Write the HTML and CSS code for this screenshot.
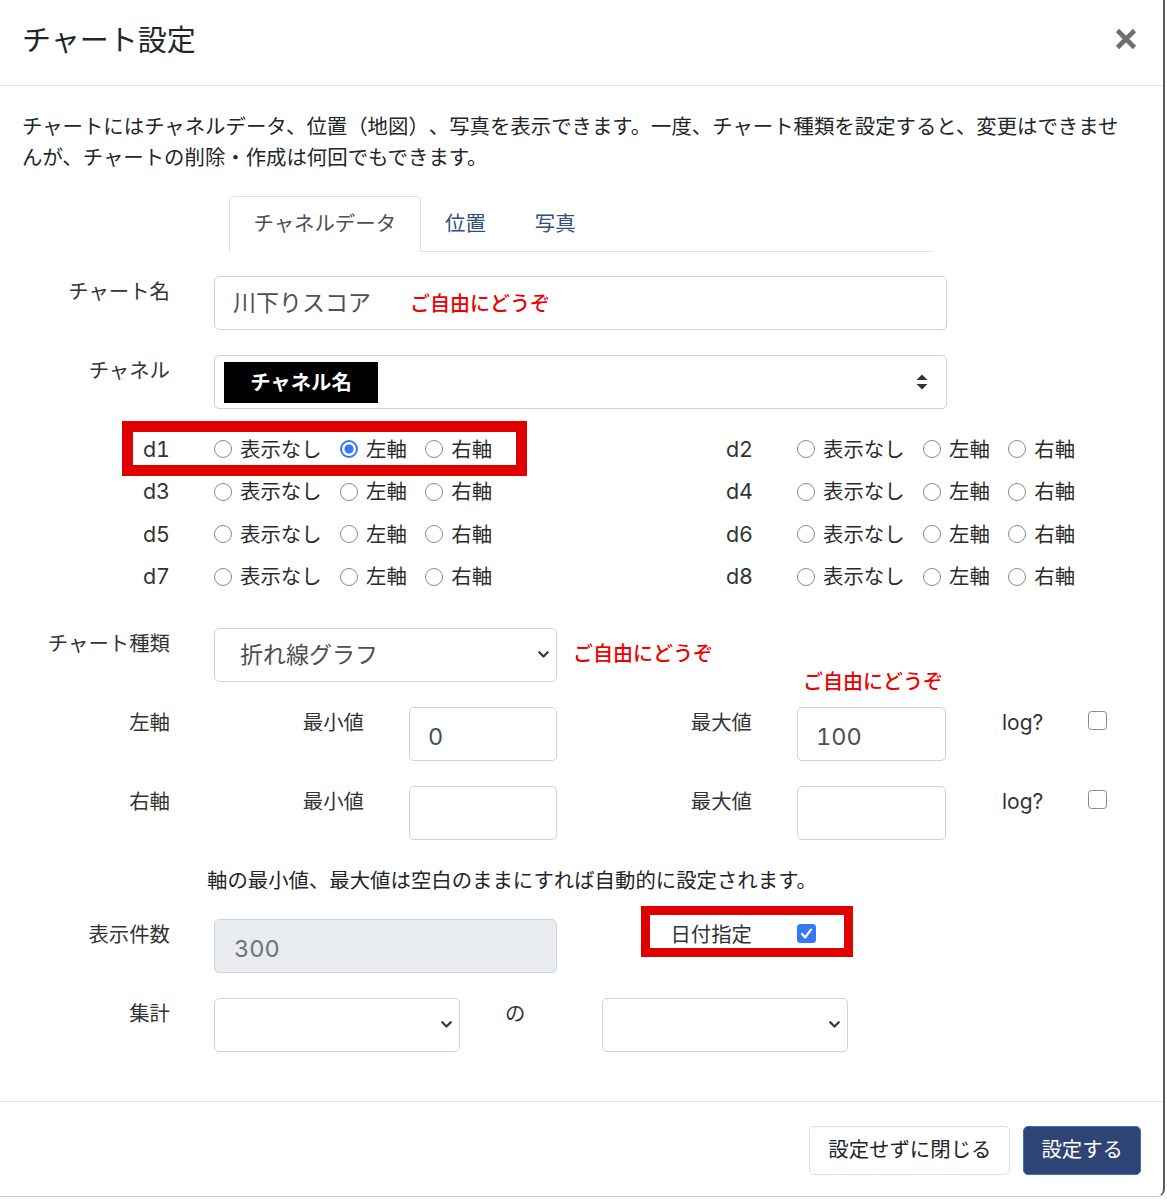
FILE: index.html
```html
<!DOCTYPE html>
<html lang="ja">
<head>
<meta charset="utf-8">
<title>チャート設定</title>
<link rel="stylesheet" href="styles.css">
</head>
<body>
<div class="modal">
  <div class="modal-header">
    <h5 class="modal-title">チャート設定</h5>
    <button class="close" type="button" aria-label="Close">
      <svg width="22" height="22" viewBox="0 0 22 22"><path d="M2.5 2.5L19.5 19.5M19.5 2.5L2.5 19.5" stroke="#6f6f6f" stroke-width="4.6" fill="none"/></svg>
    </button>
  </div>

  <div class="modal-body">
    <p class="intro">チャートにはチャネルデータ、位置（地図）、写真を表示できます。一度、チャート種類を設定すると、変更はできませんが、チャートの削除・作成は何回でもできます。</p>

    <ul class="nav-tabs">
      <li class="tab active">チャネルデータ</li>
      <li class="tab">位置</li>
      <li class="tab">写真</li>
    </ul>

    <div class="form-row">
      <label class="row-label">チャート名</label>
      <div class="fc fc-wide">
        <span class="value">川下りスコア</span>
        <span class="red-note inline-note">ご自由にどうぞ</span>
      </div>
    </div>

    <div class="form-row mb-tight">
      <label class="row-label">チャネル</label>
      <div class="fc fc-wide fc-select">
        <span class="badge">チャネル名</span>
        <svg class="updown" width="12" height="16" viewBox="0 0 12 16"><path d="M6 0.5L11.5 6H0.5Z M0.5 10H11.5L6 15.5Z" fill="#333"/></svg>
      </div>
    </div>

    <div class="radios">
      <div class="dlabel">d1</div>
      <div class="rgroup">
        <label class="ritem"><input type="radio" name="d1"><span>表示なし</span></label>
        <label class="ritem"><input type="radio" name="d1" checked><span>左軸</span></label>
        <label class="ritem"><input type="radio" name="d1"><span>右軸</span></label>
      </div>
      <div class="dlabel">d2</div>
      <div class="rgroup">
        <label class="ritem"><input type="radio" name="d2"><span>表示なし</span></label>
        <label class="ritem"><input type="radio" name="d2"><span>左軸</span></label>
        <label class="ritem"><input type="radio" name="d2"><span>右軸</span></label>
      </div>

      <div class="dlabel">d3</div>
      <div class="rgroup">
        <label class="ritem"><input type="radio" name="d3"><span>表示なし</span></label>
        <label class="ritem"><input type="radio" name="d3"><span>左軸</span></label>
        <label class="ritem"><input type="radio" name="d3"><span>右軸</span></label>
      </div>
      <div class="dlabel">d4</div>
      <div class="rgroup">
        <label class="ritem"><input type="radio" name="d4"><span>表示なし</span></label>
        <label class="ritem"><input type="radio" name="d4"><span>左軸</span></label>
        <label class="ritem"><input type="radio" name="d4"><span>右軸</span></label>
      </div>

      <div class="dlabel">d5</div>
      <div class="rgroup">
        <label class="ritem"><input type="radio" name="d5"><span>表示なし</span></label>
        <label class="ritem"><input type="radio" name="d5"><span>左軸</span></label>
        <label class="ritem"><input type="radio" name="d5"><span>右軸</span></label>
      </div>
      <div class="dlabel">d6</div>
      <div class="rgroup">
        <label class="ritem"><input type="radio" name="d6"><span>表示なし</span></label>
        <label class="ritem"><input type="radio" name="d6"><span>左軸</span></label>
        <label class="ritem"><input type="radio" name="d6"><span>右軸</span></label>
      </div>

      <div class="dlabel">d7</div>
      <div class="rgroup">
        <label class="ritem"><input type="radio" name="d7"><span>表示なし</span></label>
        <label class="ritem"><input type="radio" name="d7"><span>左軸</span></label>
        <label class="ritem"><input type="radio" name="d7"><span>右軸</span></label>
      </div>
      <div class="dlabel">d8</div>
      <div class="rgroup">
        <label class="ritem"><input type="radio" name="d8"><span>表示なし</span></label>
        <label class="ritem"><input type="radio" name="d8"><span>左軸</span></label>
        <label class="ritem"><input type="radio" name="d8"><span>右軸</span></label>
      </div>

      <div class="red-box box-d1"></div>
    </div>

    <div class="form-row">
      <label class="row-label">チャート種類</label>
      <div class="inline">
        <div class="fc fc-select fc-type">
          <span class="value">折れ線グラフ</span>
          <svg class="chev" width="11" height="7" viewBox="0 0 11 7"><path d="M1.3 1.3L5.5 5.5L9.7 1.3" stroke="#343a40" stroke-width="2.3" fill="none" stroke-linecap="round" stroke-linejoin="round"/></svg>
        </div>
        <span class="red-note after-note">ご自由にどうぞ</span>
      </div>
    </div>

    <div class="form-row axis-row">
      <label class="row-label">左軸</label>
      <div class="inline">
        <span class="sub-label">最小値</span>
        <div class="fc fc-num"><span class="value num">0</span></div>
        <span class="sub-label gap-l">最大値</span>
        <div class="fc fc-num fc-num2"><span class="value num">100</span></div>
        <span class="log">log?</span>
        <input class="cb" type="checkbox">
      </div>
      <span class="red-note max-note">ご自由にどうぞ</span>
    </div>

    <div class="form-row">
      <label class="row-label">右軸</label>
      <div class="inline">
        <span class="sub-label">最小値</span>
        <div class="fc fc-num"></div>
        <span class="sub-label gap-l">最大値</span>
        <div class="fc fc-num fc-num2"></div>
        <span class="log">log?</span>
        <input class="cb" type="checkbox">
      </div>
    </div>

    <p class="axis-help">軸の最小値、最大値は空白のままにすれば自動的に設定されます。</p>

    <div class="form-row count-row">
      <label class="row-label">表示件数</label>
      <div class="inline">
        <div class="fc fc-type fc-disabled"><span class="value num">300</span></div>
        <span class="sub-label gap-l">日付指定</span>
        <span class="cbx checked" role="checkbox" aria-checked="true">
          <svg width="19" height="19" viewBox="0 0 19 19"><path d="M5 10L8.2 13.4L14 5.6" stroke="#fff" stroke-width="2.3" fill="none" stroke-linecap="round" stroke-linejoin="round"/></svg>
        </span>
      </div>
      <div class="red-box box-date"></div>
    </div>

    <div class="form-row">
      <label class="row-label">集計</label>
      <div class="inline">
        <div class="fc fc-select fc-agg">
          <span></span>
          <svg class="chev" width="11" height="7" viewBox="0 0 11 7"><path d="M1.3 1.3L5.5 5.5L9.7 1.3" stroke="#343a40" stroke-width="2.3" fill="none" stroke-linecap="round" stroke-linejoin="round"/></svg>
        </div>
        <span class="no">の</span>
        <div class="fc fc-select fc-agg">
          <span></span>
          <svg class="chev" width="11" height="7" viewBox="0 0 11 7"><path d="M1.3 1.3L5.5 5.5L9.7 1.3" stroke="#343a40" stroke-width="2.3" fill="none" stroke-linecap="round" stroke-linejoin="round"/></svg>
        </div>
      </div>
    </div>
  </div>

  <div class="modal-footer">
    <button class="btn btn-light" type="button">設定せずに閉じる</button>
    <button class="btn btn-primary" type="button">設定する</button>
  </div>
</div>
</body>
</html>
```

FILE: styles.css
```css
* { box-sizing: border-box; }

html, body {
  margin: 0;
  padding: 0;
  background: #fff;
}

body {
  font-family: Inter, "Noto Sans CJK JP", sans-serif;
  font-size: 20.4px;
  line-height: 31px;
  color: #212529;
  text-spacing-trim: space-all;
}

.modal {
  width: 1165px;
  height: 1197px;
  background: #fff;
  border-right: 2px solid #5a5a5a;
  border-bottom: 1px solid #c9c9c9;
  border-bottom-right-radius: 8px;
}

/* header */
.modal-header {
  height: 86px;
  border-bottom: 1px solid #dee2e6;
  display: flex;
  align-items: center;
  justify-content: space-between;
  padding: 0 26px 4px 22px;
}

.modal-title {
  margin: 0;
  font-size: 29px;
  font-weight: 400;
  line-height: 40px;
  color: #212529;
}

.close {
  border: 0;
  background: none;
  padding: 0;
  width: 22px;
  height: 22px;
  margin-top: -4px;
  display: flex;
}

/* body */
.modal-body {
  padding: 24.5px 22px 24px 22px;
}

.intro {
  margin: 0;
  max-width: 1108px;
}

.nav-tabs {
  list-style: none;
  margin: 23.5px 0 24px 207px;
  padding: 0;
  width: 703px;
  display: flex;
  border-bottom: 1px solid #dee2e6;
}

.tab {
  height: 56px;
  line-height: 54px;
  padding: 0 23.5px;
  margin-bottom: -1px;
  border: 1px solid transparent;
  border-top-left-radius: 5px;
  border-top-right-radius: 5px;
  color: #2f4d7e;
}

.tab.active {
  color: #495057;
  background: #fff;
  border-color: #dee2e6 #dee2e6 #fff;
}

/* form rows */
.form-row {
  position: relative;
  display: grid;
  grid-template-columns: 148px 1fr;
  column-gap: 44px;
  margin-bottom: 25px;
}

.form-row.mb-tight {
  margin-bottom: 18.7px;
}

.row-label {
  text-align: right;
  color: #333;
}

.fc {
  height: 54px;
  border: 1px solid #ced4da;
  border-radius: 5px;
  background: #fff;
  display: flex;
  align-items: center;
  padding-left: 18px;
  font-size: 23px;
  color: #495057;
}

.value {
  padding-top: 1px;
}

.value.num {
  padding-top: 5px;
  font-size: 23.5px;
  font-variant-numeric: tabular-nums;
}

.fc-wide {
  width: 733px;
}

.fc-select {
  justify-content: space-between;
  padding-right: 7.5px;
}

.fc-wide.fc-select {
  padding-left: 9px;
  padding-right: 18px;
}

.badge {
  width: 154px;
  height: 41px;
  background: #000;
  color: #fff;
  font-size: 20.4px;
  font-weight: 700;
  display: flex;
  align-items: center;
  justify-content: center;
}

.red-note {
  color: #ee0000;
  font-size: 20px;
  font-weight: 500;
}

.inline-note {
  margin-left: 39px;
  padding-top: 3px;
}

.inline {
  display: flex;
  align-items: flex-start;
}

.fc-type {
  width: 343px;
  padding-left: 25px;
}

.fc-disabled {
  background: #e9ecef;
  padding-left: 19px;
  color: #6c757d;
}

.after-note {
  margin-left: 16px;
  align-self: center;
}

/* radios */
.radios {
  position: relative;
  display: grid;
  grid-template-columns: 148px 347px 148px 1fr;
  column-gap: 44px;
  grid-auto-rows: 42.67px;
  margin-bottom: 29.6px;
}

.dlabel {
  display: flex;
  align-items: center;
  justify-content: flex-end;
  color: #333;
  font-size: 21.5px;
  font-variant-numeric: tabular-nums;
}

.rgroup {
  display: flex;
  align-items: center;
}

.ritem {
  display: flex;
  align-items: center;
  margin-right: 18.5px;
  color: #2a2a2a;
}

.ritem input {
  appearance: none;
  -webkit-appearance: none;
  width: 18px;
  height: 18px;
  margin: 0 8px 0 0;
  border: 1px solid #8a8a8a;
  border-radius: 50%;
  background: #fff;
}

.ritem input:checked {
  border: 2px solid #3579f6;
  background: radial-gradient(circle, #3579f6 0 4.2px, #fff 4.9px);
}

/* annotation boxes */
.red-box {
  position: absolute;
  border: 11.5px solid #e00000;
  pointer-events: none;
}

.box-d1 {
  left: 100px;
  top: -6.7px;
  width: 405px;
  height: 55px;
}

.box-date {
  left: 619px;
  top: -13px;
  width: 212px;
  height: 51px;
  border-width: 9px;
}

/* axis rows */
.sub-label {
  width: 150px;
  text-align: right;
  color: #333;
}

.gap-l {
  margin-left: 45px;
}

.fc-num {
  width: 148px;
  margin-left: 45px;
}

.fc-num2 {
  width: 149px;
}

.log {
  width: 86px;
  margin-left: 56px;
  color: #333;
  font-size: 21px;
}

.cb {
  appearance: none;
  -webkit-appearance: none;
  width: 19px;
  height: 19px;
  margin: 4px 0 0 0;
  border: 1px solid #8a8a8a;
  border-radius: 3.5px;
  background: #fff;
}

.max-note {
  position: absolute;
  left: 781px;
  top: -39.5px;
  line-height: 31px;
}

.axis-help {
  margin: 0 0 23px 185px;
  color: #212529;
}

.cbx {
  width: 19px;
  height: 19px;
  margin: 5px 0 0 45px;
  border-radius: 3.5px;
  display: flex;
}

.cbx.checked {
  background: #3579f6;
}

/* aggregate */
.fc-agg {
  width: 246px;
}

.no {
  width: 97px;
  margin-left: 45px;
  color: #333;
}

/* footer */
.modal-footer {
  border-top: 1px solid #dee2e6;
  display: flex;
  justify-content: flex-end;
  gap: 13px;
  padding: 24px 22px 0 0;
}

.btn {
  height: 49px;
  border-radius: 5px;
  font-family: inherit;
  font-size: 20.4px;
  line-height: 1;
  padding: 0 18px;
  cursor: pointer;
}

.btn-light {
  background: #fff;
  border: 1px solid #dcdfe3;
  color: #212529;
}

.btn-primary {
  background: #2e4475;
  border: 1.5px solid #3a6fd6;
  color: #fff;
  padding: 0 17px;
}
```
